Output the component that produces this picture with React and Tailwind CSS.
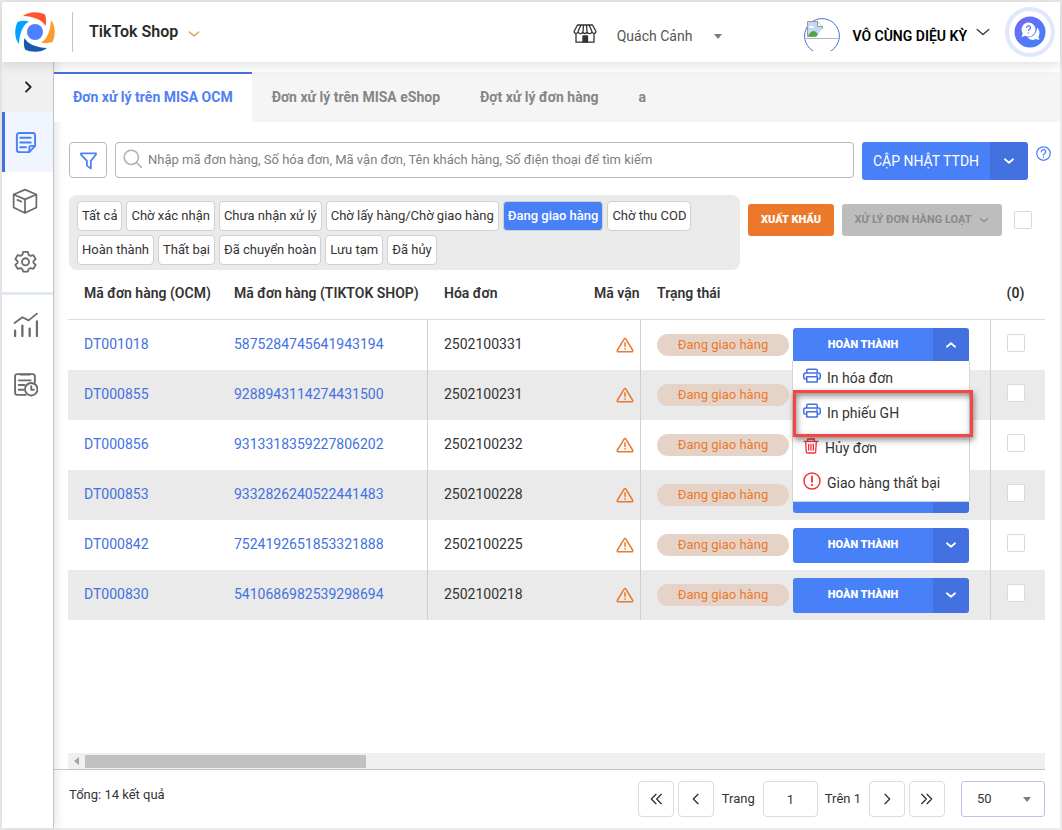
import { useState } from 'react'

const statuses = [
  'Tất cả', 'Chờ xác nhận', 'Chưa nhận xử lý', 'Chờ lấy hàng/Chờ giao hàng', 'Đang giao hàng',
  'Chờ thu COD', 'Hoàn thành', 'Thất bại', 'Đã chuyển hoàn', 'Lưu tạm', 'Đã hủy',
]

const orders = [
  { id: 'DT001018', shopId: '5875284745641943194', invoice: '2502100331' },
  { id: 'DT000855', shopId: '9288943114274431500', invoice: '2502100231' },
  { id: 'DT000856', shopId: '9313318359227806202', invoice: '2502100232' },
  { id: 'DT000853', shopId: '9332826240522441483', invoice: '2502100228' },
  { id: 'DT000842', shopId: '7524192651853321888', invoice: '2502100225' },
  { id: 'DT000830', shopId: '5410686982539298694', invoice: '2502100218' },
]

const tabs = ['Đơn xử lý trên MISA OCM', 'Đơn xử lý trên MISA eShop', 'Đợt xử lý đơn hàng', 'a']

function Icon({ size = 24, width = 2, className = '', children }) {
  return (
    <svg width={size} height={size} viewBox="0 0 24 24" fill="none" stroke="currentColor" strokeWidth={width}
      strokeLinecap="round" strokeLinejoin="round" className={`shrink-0 ${className}`} aria-hidden="true">
      {children}
    </svg>
  )
}

const Chevron = ({ dir = 'down', ...rest }) => {
  const d = {
    down: 'm5 9 7 6 7-6',
    up: 'm5 15 7-6 7 6',
    left: 'm15 5-7 7 7 7',
    right: 'm9 5 7 7-7 7',
    first: 'm12 5-7 7 7 7M20 5l-7 7 7 7',
    last: 'm4 5 7 7-7 7M12 5l7 7-7 7',
  }[dir]
  return <Icon {...rest}><path d={d} /></Icon>
}

function Logo() {
  const blade = 'M-12-16C-6-21 4-20.500 10-17.500Q12-12 10.500-6C7-12.500-2-15.500-12-16Z'
  return (
    <svg width="42" height="42" viewBox="-21 -21 42 42" className="shrink-0" aria-hidden="true">
      <circle r="8" fill="#4f80ff" />
      <path d={blade} fill="#ff5630" />
      <path d={blade} fill="#ff9a33" transform="rotate(90)" />
      <path d={blade} fill="#1859a9" transform="rotate(180)" />
      <path d={blade} fill="#00a3ff" transform="rotate(270)" />
    </svg>
  )
}

function StoreIcon() {
  return (
    <svg width="24" height="20" viewBox="0 0 24 20" fill="none" stroke="#333" strokeWidth="1.300" strokeLinejoin="round" className="shrink-0" aria-hidden="true">
      <path d="M4.500 1h15L23 7.500c0 2-3 2.700-4 .5-1 2.200-4.500 2.200-5 0-.5 2-3.500 2-4 0-.5 2.200-4 2.200-5 0-1 2.200-4 1.500-4-.5zM8 1 5 7.500M10.500 1 10 7.500M13.500 1l.5 6.500M16 1l3 6.500M3 9.500v8.700h18V9.500" />
      <path d="M10 18v-6h4.500v6z" fill="#333" />
    </svg>
  )
}

function ChatIcon() {
  return (
    <svg width="50" height="50" viewBox="0 0 50 50" className="shrink-0" aria-hidden="true">
      <defs>
        <linearGradient id="chat" x1="0" y1="0" x2="1" y2="1">
          <stop offset="0" stopColor="#7367f5" />
          <stop offset="1" stopColor="#3f84fa" />
        </linearGradient>
      </defs>
      <circle cx="25" cy="25" r="23" fill="#fff" stroke="#dfe8fd" strokeWidth="4" />
      <circle cx="25" cy="25" r="15.500" fill="url(#chat)" />
      <path d="M32 20.500a7 7 0 0 1 1.500 9l.8 3.500-3.500-1a7 7 0 0 1-8.300-1.500c5.500 0 9.500-4 9.500-10Z" fill="#fff" />
      <path d="M23.500 15.500a7 7 0 1 1-3.200 13.200l-3.800 1.200 1.200-3.600a7 7 0 0 1 5.800-10.800Z" fill="#fff" />
      <path d="M21.500 20.700c.2-2.400 4-2.300 4 0 0 1.500-2 1.500-2 3.300M23.500 25.500v1" fill="none" stroke="#5e75f8" strokeWidth="1.300" />
    </svg>
  )
}

// Placeholder the browser shows when the avatar fails to load
function Avatar() {
  return (
    <svg width="36" height="33" viewBox="0 0 36 33" className="shrink-0" aria-hidden="true">
      <circle cx="18" cy="18" r="17.400" fill="#fff" stroke="#4372e0" />
      <path d="M2 20.500h33" stroke="#b5b5b5" />
      <path d="M3.500 3.500h10l5 5v10h-15z" fill="#c4d7f5" stroke="#9a9a9a" />
      <path d="M13.500 3.500v5h5" fill="#fff" stroke="#9a9a9a" />
      <path d="M5 9.500q1-3 3-1.500 3 0 2 2H5z" fill="#fff" />
      <path d="M4 18q4-7 8-4l3 4z" fill="#4ba83a" />
      <path d="m19 10-7 9h7z" fill="#fff" />
    </svg>
  )
}

const DocIcon = () => (
  <Icon size={23} width={2}>
    <path d="M22 15.500V4.500a2.500 2.500 0 0 0-2.500-2.500h-14A2.500 2.500 0 0 0 3 4.500v15A2.500 2.500 0 0 0 5.500 22H16z" />
    <path d="M22 15.500h-4a2 2 0 0 0-2 2V22M6.500 7h11M6.500 12h11M6.500 17h6" />
  </Icon>
)

const BoxIcon = () => (
  <Icon size={26} width={1.600}>
    <path d="M12 1.500 22.500 6v12L12 23 1.500 18V6zM1.500 6 12 10.500 22.500 6M12 10.500V23M5 11l3.500 1.500" />
  </Icon>
)

const GearIcon = () => (
  <Icon size={23} width={1.900}>
    <path d="M9.500 2h5l.7 3 2 1.200 3-.9 2.400 4.200-2.300 2.100v1.800l2.300 2.100-2.400 4.200-3-.9-2 1.200-.7 2.500h-5l-.7-2.500-2-1.200-3 .9-2.400-4.200 2.300-2.100v-1.800L1.400 9.500l2.400-4.200 3 .9L8.800 5z" />
    <circle cx="12" cy="12.300" r="3.700" />
  </Icon>
)

const ChartIcon = () => (
  <Icon size={25} width={2.200}>
    <path d="M1.500 10.500 9 5l6 3 8-6.500" strokeWidth="1.700" />
    <path d="M2 18v5M9 13v10M16 16v7M23 9v14" />
  </Icon>
)

const HistoryIcon = () => (
  <Icon size={25} width={1.800}>
    <path d="M21 10V4a2 2 0 0 0-2-2H4a2 2 0 0 0-2 2v16a2 2 0 0 0 2 2h8" />
    <path d="M7 2.500h9M5.500 8H17M5.500 12.500H11M5.500 17H10" />
    <circle cx="17.500" cy="16.500" r="6" /><path d="M17.500 13.500v3.500H20" />
  </Icon>
)

const PrinterIcon = () => (
  <Icon size={18} width={2} className="mb-1 text-[#4372e0]">
    <path d="M5 8V4.500A1.500 1.500 0 0 1 6.500 3h11A1.500 1.500 0 0 1 19 4.500V8M5 16H3a2 2 0 0 1-2-2v-3.500A2.500 2.500 0 0 1 3.500 8h17a2.500 2.500 0 0 1 2.500 2.500V14a2 2 0 0 1-2 2h-2M5 13h14v7H5zM18 10.700h1" />
  </Icon>
)

const TrashIcon = () => (
  <Icon size={16} width={2} className="mb-1 text-[#f4333c]">
    <path d="M1.500 5h21M7 5V1.500h10V5M4 5l1 16a1.800 1.800 0 0 0 2 1.500h10a1.800 1.800 0 0 0 2-1.500L20 5M8.500 9.500v8.500M12 9.500v8.500M15.500 9.500v8.500" />
  </Icon>
)

const AlertIcon = () => (
  <Icon size={18} width={2} className="mb-1 text-[#f4333c]">
    <circle cx="12" cy="12" r="10.700" /><path d="M12 6v7M12 17v.5" strokeWidth="2.500" />
  </Icon>
)

const WarningIcon = () => (
  <Icon size={18} width={2} className="text-[#ec792b]">
    <path d="M11 3.800 1.800 19a1.300 1.300 0 0 0 1.200 2h18a1.300 1.300 0 0 0 1.200-2L13 3.800a1.200 1.200 0 0 0-2 0ZM12 9v5M12 17v.5" />
  </Icon>
)

const Caret = ({ className = '' }) => (
  <svg width="8" height="5" viewBox="0 0 8 5" fill="#7d7d7d" className={`shrink-0 ${className}`} aria-hidden="true"><path d="M0 0h8L4 5z" /></svg>
)

function Checkbox({ label }) {
  return (
    <input type="checkbox" aria-label={label}
      className="block size-[18px] shrink-0 appearance-none rounded-xs border border-[#d9d9d9] bg-white checked:bg-[#4880f8]" />
  )
}

function Header() {
  return (
    <header className="relative z-10 flex h-[60px] items-center bg-white pl-3 shadow-[0_2px_12px_rgba(0,0,0,0.14)]">
      <Logo />
      <div className="ml-4 h-10 w-px bg-[#c4c4c4]" />
      <button type="button" className="ml-4 flex items-center gap-2 text-base font-semibold text-[#2b2b2b]">
        TikTok Shop
        <Chevron size={16} width={1.800} className="mt-1 text-[#d99a3c]" />
      </button>
      <div className="ml-auto flex items-center">
        <div className="flex items-center pt-1">
          <StoreIcon />
          <button type="button" className="ml-5 flex items-center gap-[22px] pt-1 text-sm text-[#555]">
            Quách Cảnh
            <Caret />
          </button>
          <button type="button" className="ml-[82px] flex items-center text-sm font-semibold text-black">
            <Avatar />
            <span className="ml-3 pt-1">VÔ CÙNG DIỆU KỲ</span>
            <Chevron size={20} width={1.500} className="mb-1 ml-[6px] text-[#333]" />
          </button>
        </div>
        <button type="button" aria-label="Trợ giúp" className="mr-[5px] ml-3">
          <ChatIcon />
        </button>
      </div>
    </header>
  )
}

function Sidebar() {
  const item = 'flex h-[60px] items-center justify-center pr-[5px] pb-[2px] text-[#6b6b6b]'
  return (
    <nav className="w-[52px] shrink-0 border-r border-[#c4c4c4] bg-white shadow-[2px_0_10px_rgba(0,0,0,0.12)]">
      <button type="button" aria-label="Mở rộng" className="flex h-[50px] w-full items-center justify-center bg-[#f0f0f0] text-[#222]">
        <Chevron dir="right" size={16} width={2.800} />
      </button>
      <a href="#orders" aria-label="Đơn hàng" className="flex h-[60px] items-center justify-center border-l-3 border-[#4372e0] bg-[#f0f5ff] pr-[8px] text-[#4880f8]"><DocIcon /></a>
      <a href="#products" aria-label="Hàng hóa" className={item}><BoxIcon /></a>
      <a href="#settings" aria-label="Thiết lập" className={item}><GearIcon /></a>
      <div className="h-[3px] bg-[#e2e9f6]" />
      <a href="#reports" aria-label="Báo cáo" className={item}><ChartIcon /></a>
      <a href="#history" aria-label="Lịch sử" className={item}><HistoryIcon /></a>
    </nav>
  )
}

function ActionMenu() {
  const item = 'flex h-[35px] w-full items-center gap-[6px] px-[10px] text-left'
  return (
    <div className="absolute top-[33px] -left-px z-20 h-[141px] w-[178px] border border-t-0 border-[#d5d5d5] bg-white text-sm text-[#333]">
      <button type="button" className={item}><PrinterIcon />In hóa đơn</button>
      <button type="button" className={item}><PrinterIcon />In phiếu GH</button>
      <button type="button" className={item}><TrashIcon />Hủy đơn</button>
      <button type="button" className={item}><AlertIcon />Giao hàng thất bại</button>
      <div className="pointer-events-none absolute top-[29px] left-0 h-[47px] w-[180px] border-3 border-[#f84444] shadow-[1px_3px_6px_rgba(0,0,0,0.45),inset_1px_3px_6px_rgba(0,0,0,0.45)]" />
    </div>
  )
}

function ActionButton({ open, onToggle }) {
  return (
    <div className="relative flex h-[35px] w-[176px] shrink-0">
      <button type="button" className="flex-1 rounded-l-[3px] bg-[#4880f8] text-[11px] font-black text-white">HOÀN THÀNH</button>
      <button type="button" aria-label="Thao tác khác" aria-expanded={open} onClick={onToggle}
        className="flex w-9 items-center justify-center rounded-r-[3px] bg-[#4372e0] text-white">
        <Chevron dir={open ? 'up' : 'down'} size={14} width={3} />
      </button>
      {open && <ActionMenu />}
    </div>
  )
}

function OrderTable() {
  const [openId, setOpenId] = useState('DT001018')
  return (
    <table className="mr-[15px] ml-[14px] table-fixed border-separate border-spacing-0 text-left text-sm text-[#333]">
      <colgroup>
        <col className="w-[150px]" />
        <col className="w-[210px]" />
        <col className="w-[150px]" />
        <col className="w-[63px]" />
        <col />
        <col className="w-[55px]" />
      </colgroup>
      <thead>
        <tr className="h-[50px] text-[#333] *:border-b *:border-[#dcdcdc] *:pb-1">
          <th className="pl-4 font-semibold whitespace-nowrap">Mã đơn hàng (OCM)</th>
          <th className="pl-4 font-semibold whitespace-nowrap">Mã đơn hàng (TIKTOK SHOP)</th>
          <th className="pl-4 font-semibold">Hóa đơn</th>
          <th className="overflow-hidden pl-4 font-semibold whitespace-nowrap">Mã vận</th>
          <th className="pl-4 font-semibold">Trạng thái</th>
          <th className="pr-1 text-center font-semibold">(0)</th>
        </tr>
      </thead>
      <tbody>
        {orders.map(order => (
          <tr key={order.id} className="h-[50px] even:bg-[#eaeaea]">
            <td className="pb-[2px] pl-4"><a href={`#${order.id}`} className="text-[#4372e0]">{order.id}</a></td>
            <td className="border-r border-[#cfcfcf] pb-[2px] pl-4"><a href={`#${order.shopId}`} className="text-[#4372e0]">{order.shopId}</a></td>
            <td className="pb-[2px] pl-4">{order.invoice}</td>
            <td className="border-r border-[#cfcfcf] pr-[6px]"><div className="flex justify-end"><WarningIcon /></div></td>
            <td className="pl-4">
              <div className="flex items-center gap-1">
                <span className="h-[22px] w-[132px] shrink-0 rounded-full bg-[#e6d3c7] text-center text-[13px] leading-[22px] text-[#ec792b]">Đang giao hàng</span>
                <ActionButton open={openId === order.id} onToggle={() => setOpenId(openId === order.id ? null : order.id)} />
              </div>
            </td>
            <td className="border-l border-[#cfcfcf] pb-1 pl-4"><Checkbox label={`Chọn ${order.id}`} /></td>
          </tr>
        ))}
      </tbody>
    </table>
  )
}

function Pager() {
  const btn = 'flex size-9 items-center justify-center rounded-[4px] border border-[#dcdcdc] text-[#333]'
  return (
    <footer className="flex h-[58px] items-center pr-[15px] pl-[15px] text-[13px] text-[#333]">
      <span className="pb-2">Tổng: 14 kết quả</span>
      <div className="ml-auto flex items-center gap-1">
        <button type="button" aria-label="Trang đầu" className={btn}><Chevron dir="first" size={16} /></button>
        <button type="button" aria-label="Trang trước" className={btn}><Chevron dir="left" size={16} /></button>
        <label htmlFor="page" className="px-1">Trang</label>
        <input id="page" defaultValue="1" className="h-9 w-[55px] rounded-[4px] border border-[#dcdcdc] text-center" />
        <span className="pr-1 pl-[3px]">Trên 1</span>
        <button type="button" aria-label="Trang sau" className={btn}><Chevron dir="right" size={16} /></button>
        <button type="button" aria-label="Trang cuối" className={btn}><Chevron dir="last" size={16} /></button>
        <div className="relative ml-3">
          <select aria-label="Số dòng" className="block h-9 w-[84px] appearance-none rounded-[3px] border border-[#b9c4e6] bg-white pl-[15px]">
            <option>50</option>
            <option>100</option>
          </select>
          <Caret className="pointer-events-none absolute top-4 right-[14px]" />
        </div>
      </div>
    </footer>
  )
}

export default function App() {
  const [tab, setTab] = useState(tabs[0])
  const [status, setStatus] = useState('Đang giao hàng')

  return (
    <div className="flex min-h-screen flex-col border-2 border-[#ececec] bg-white font-['Roboto',sans-serif] text-[#333]">
      <Header />
      <div className="flex flex-1">
        <Sidebar />
        <main className="flex min-w-0 flex-1 flex-col">

          {/* Tabs */}
          <div className="mt-[10px] flex h-[50px] bg-[#f5f5f5] text-sm font-bold text-[#858585]">
            {tabs.map(name => (
              <button key={name} type="button" onClick={() => setTab(name)}
                className={name === tab ? 'border-t-2 border-[#4372e0] bg-white px-[19px] pb-[2px] text-[#4f80f5]' : 'px-5'}>
                {name}
              </button>
            ))}
          </div>

          {/* Search */}
          <div className="mt-5 flex items-start gap-2 pr-[9px] pl-[15px]">
            <button type="button" aria-label="Bộ lọc" className="flex h-9 w-[38px] items-center justify-center rounded-[4px] border border-[#b8b8b8] text-[#4f80f5]">
              <Icon size={19} width={2.200}><path d="M2.500 3h19v1.500L15 12.500V22l-5-3.500v-6L2.500 4.500z" /></Icon>
            </button>
            <label className="flex h-9 flex-1 items-center gap-[6px] rounded-[4px] border border-[#b8b8b8] pl-[7px]">
              <Icon size={19} width={2} className="mb-1 text-[#b0b0b0]"><circle cx="10.500" cy="10.500" r="9" /><path d="m17 17 6 6" /></Icon>
              <input aria-label="Tìm kiếm" className="min-w-0 flex-1 text-[13px] outline-none placeholder:text-[#808080]"
                placeholder="Nhập mã đơn hàng, Số hóa đơn, Mã vận đơn, Tên khách hàng, Số điện thoại để tìm kiếm" />
            </label>
            <div className="flex h-[38px] text-white">
              <button type="button" className="w-32 rounded-l-[3px] bg-[#4880f8] text-sm">CẬP NHẬT TTDH</button>
              <button type="button" aria-label="Tùy chọn cập nhật" className="flex w-[38px] items-center justify-center rounded-r-[3px] bg-[#4372e0]">
                <Chevron size={14} width={3} />
              </button>
            </div>
            <button type="button" aria-label="Hướng dẫn" className="mt-1 text-[#4f80f5]">
              <Icon size={15} width={2}><circle cx="12" cy="12" r="10.800" /><path d="M8.500 9.500c0-5 7-4.500 7 0 0 2.500-3.500 2.500-3.500 5M12 17.500v.5" /></Icon>
            </button>
          </div>

          {/* Status filter */}
          <div className="mt-[15px] flex items-start gap-2 pr-7 pl-[15px]">
            <div className="flex flex-1 flex-wrap content-start gap-1 rounded-[8px] bg-[#eaeaea] px-2 pt-[6px] pb-[5px] text-[13px]">
              {statuses.map(name => (
                <button key={name} type="button" onClick={() => setStatus(name)}
                  className={`h-[30px] rounded-[4px] border border-[#d0d0d0] px-1 ${name === status ? 'bg-[#4880f8] font-medium text-white' : 'bg-white'}`}>
                  {name}
                </button>
              ))}
            </div>
            <div className="mt-[9px] flex items-center gap-2">
              <button type="button" className="h-8 w-[86px] rounded-[3px] bg-[#ec792b] text-[11px] font-black text-white">XUẤT KHẨU</button>
              <button type="button" disabled className="flex h-8 w-40 items-center justify-center gap-[6px] rounded-[3px] bg-[#bdbdbd] text-[11px] font-bold text-[#8a8a8a]">
                XỬ LÝ ĐƠN HÀNG LOẠT
                <Chevron size={12} width={2.500} />
              </button>
              <div className="ml-1"><Checkbox label="Chọn tất cả" /></div>
            </div>
          </div>

          <OrderTable />

          {/* Horizontal scrollbar */}
          <div className="mt-auto mr-[15px] border-b border-[#c4c4c4] pl-[14px]">
            <div className="flex h-4 items-center gap-[6px] bg-[#f0f0f0] pl-[6px]">
              <svg width="5" height="8" viewBox="0 0 5 8" fill="#a3a3a3" aria-hidden="true"><path d="M5 0v8L0 4z" /></svg>
              <div className="h-[13px] w-[281px] bg-[#c1c1c1]" />
            </div>
          </div>

          <Pager />
        </main>
      </div>
    </div>
  )
}
